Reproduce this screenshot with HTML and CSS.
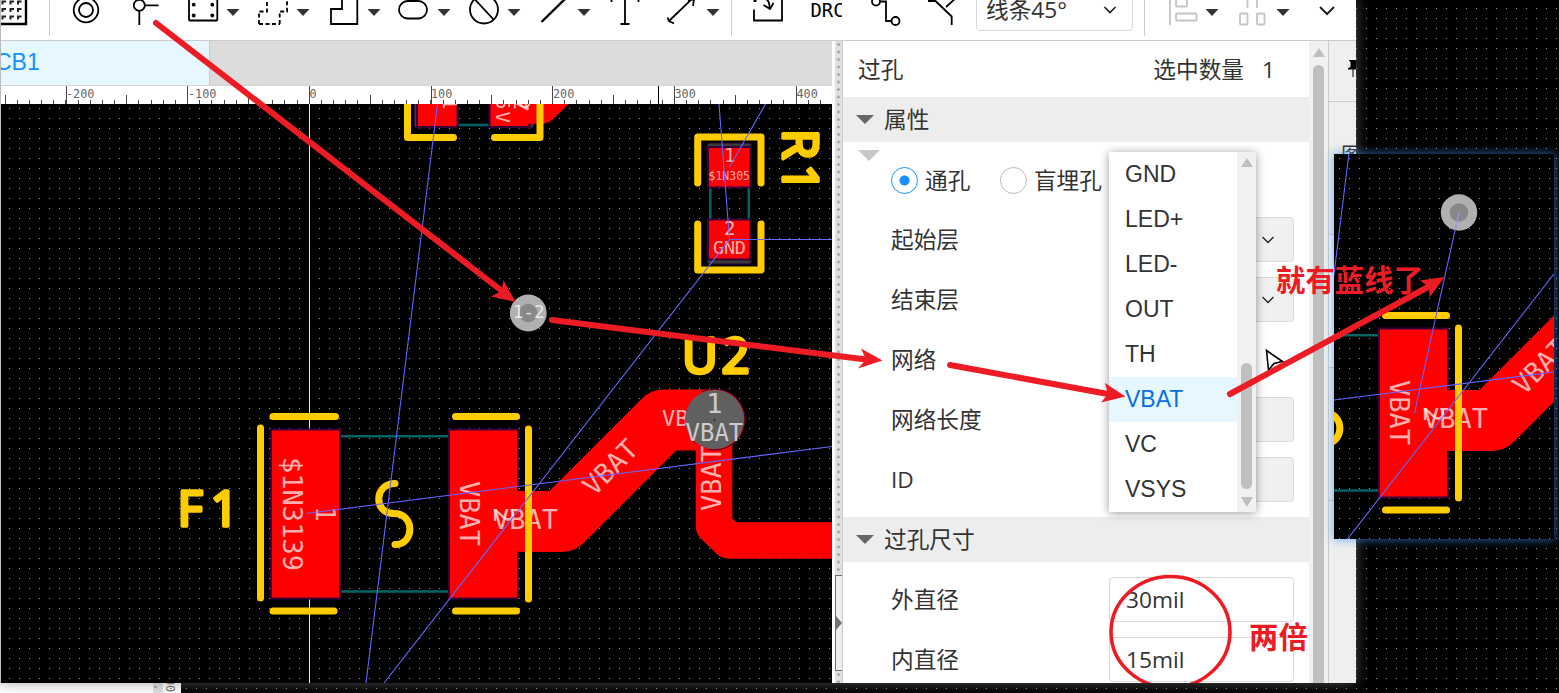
FILE: index.html
```html
<!DOCTYPE html>
<html lang="zh-CN">
<head>
<meta charset="utf-8">
<title>PCB</title>
<link rel="stylesheet" href="styles.css">
</head>
<body>
<div class="desktop">
  <div class="behind"><div class="behind-strip"></div><div class="behind-ruler"><svg width="18" height="10"><text class="rul" transform="translate(3,-5) rotate(90)">00</text></svg></div></div>

  <div class="window">
    <header class="toolbar">
      <svg class="tools" width="975" height="40" viewBox="1 0 975 40">
        <g class="ic">
          <path d="M26 -2V24H-2" stroke-width="2.4"/>
          <path d="M2.500 4.500V1.500H6M10.500 4.500V1.500H14M18 4.500V1.500H21.500M2.500 12V9H6M10.500 12V9H14M18 12V9H21.500M2.500 19.500V16.500H6M10.500 19.500V16.500H14M18 19.500V16.500H21.500" stroke-width="2" stroke="#222"/>
          <circle cx="86" cy="10" r="12.300"/><circle cx="86" cy="10" r="7"/>
          <circle cx="139.300" cy="5.300" r="5.500"/><path d="M145 5.300H158.500M139.300 11V25"/>
          <rect x="189" y="-6" width="28.300" height="26.500" rx="1"/>
          <path d="M259 24V11.500H267V-4M279.700 24V11.500H287V-4M259 24H280" stroke-dasharray="4 2.500"/>
          <path d="M342 -3V9H331V24H357.300V-3"/>
          <rect x="399" y="1" width="28" height="17.500" rx="8.700"/>
          <circle cx="484" cy="9.500" r="14"/><path d="M474.500 -1L494 20"/>
          <path d="M541.500 22L566 -2" stroke-width="2.400"/>
          <path d="M625 -3V24M620.500 24H629.500M611.500 2V-2M638.500 2V-2"/>
          <path d="M669.500 20.500L695 -4M667.500 17.500L669 21L674 23.500M688 1L694 -1L693 6"/>
          <path d="M753.500 1H756.500M754 9.500V20.500H782V-2M764 -2Q770 0 769.500 8M763.500 5L770 9L773.500 3"/>
          <circle cx="876" cy="1.500" r="4"/><path d="M880 1.500H886V21H891"/><circle cx="895.500" cy="21" r="4"/>
          <path d="M928 1H935.500L951.700 16.500V25M946 7L957 -3"/>
        </g>
        <g fill="#000"><circle cx="193.700" cy="4.700" r="1.900"/><circle cx="212.300" cy="4.700" r="1.900"/><circle cx="193.700" cy="15.500" r="1.900"/><circle cx="212.300" cy="15.500" r="1.900"/></g>
        <path class="caret" d="M226.500 9h13l-6.500 7zM296.500 9h13l-6.500 7zM367.500 9h13l-6.500 7zM437.500 9h13l-6.500 7zM507.500 9h13l-6.500 7zM577.500 9h13l-6.500 7zM706.500 9h13l-6.500 7z"/>
        <path class="sep" d="M49.500 0V36M731.500 0V36"/>
        <svg x="808" y="0" width="34" height="40"><text class="drc" x="2.500" y="17" textLength="34" lengthAdjust="spacingAndGlyphs">DRC</text></svg>
      </svg>
      <div class="angle"><span>线条45°</span><svg width="14" height="10" viewBox="0 0 14 10"><path class="chev" d="M1.500 2L7 7.500L12.500 2"/></svg></div>
      <svg class="tools" width="223" height="40" viewBox="1133 0 223 40">
        <path class="sep" d="M1144.500 0V36"/>
        <g class="ic off">
          <path d="M1170 0V25"/><rect x="1176" y="-4" width="11" height="10.500" rx="1"/><rect x="1176" y="13.500" width="20.500" height="7" rx="1"/>
          <path d="M1247.500 0V8M1257 0V8"/><rect x="1240" y="13.500" width="7.500" height="11" rx="1"/><rect x="1257" y="13.500" width="7.500" height="11" rx="1"/>
        </g>
        <path class="caret" d="M1205.500 9h13l-6.500 7zM1276.500 9h13l-6.500 7z"/>
        <path class="chev heavy" d="M1320 7L1327 14L1334 7"/>
      </svg>
    </header>

    <div class="work">
      <section class="editor">
        <div class="tabs"><div class="tab">CB1</div></div>
        <svg class="ruler" width="831" height="18" viewBox="1 86 831 18">
          <g shape-rendering="crispEdges" stroke="#444" fill="none">
            <path d="M4.500 102H832" stroke-width="4" stroke-dasharray="1 11.170"/>
            <path d="M4.500 99.500H832" stroke-width="9" stroke-dasharray="1 120.700"/>
            <path d="M65.500 95H832" stroke-width="18" stroke-dasharray="1 120.700"/>
            <path d="M658.500 86V104" stroke="#000"/>
          </g>
          <g class="rul"><text x="66" y="98">-200</text><text x="188" y="98">-100</text><text x="309.500" y="98">0</text><text x="431" y="98">100</text><text x="553" y="98">200</text><text x="674.500" y="98">300</text><text x="796.500" y="98">400</text></g>
        </svg>
        <svg class="board dots" width="831" height="579" viewBox="1 104 831 579">
          <g id="board">
            <path d="M309.500 104V683" stroke="#e8e8e8"/>
            <g class="teal"><path d="M341 436.200H449M341 591.500H449M710.300 188V219M748.800 188V219M458 125H490"/></g>
            <g class="pads-shadow"><rect x="707" y="143" width="44.500" height="20" rx="3"/><rect x="707" y="243" width="44.500" height="21" rx="3"/><rect x="414" y="95" width="20" height="33" rx="3"/><rect x="514" y="95" width="20" height="33" rx="3"/></g>
            <g class="track">
              <path stroke-width="61" d="M487 521.500H562L663.600 420H714"/>
              <path stroke-width="36.500" d="M714 420V526L729 540.500H850"/>
              <path stroke-width="36.500" d="M512 105.500H541L570 77"/>
            </g>
            <circle cx="714.500" cy="419.500" r="30.500" fill="#f00" stroke="#38003a"/>
            <path d="M660 392H714V449H696V440H660z" fill="#f00"/>
            <g class="pad"><rect x="271" y="429.500" width="69" height="169"/><rect x="449" y="429.500" width="69" height="169"/><rect x="708" y="147" width="42.500" height="40.500"/><rect x="708" y="219.500" width="42.500" height="40"/><rect x="417" y="95" width="40.500" height="32"/><rect x="489.500" y="95" width="40" height="32"/></g>
            <path d="M510 491.500H522V551.500H510zM510 100H534V123.500H510z" fill="#f00"/>
            <g class="pt">
              <text transform="translate(283,457) rotate(90)" font-size="27" textLength="114">$1N3139</text>
              <text transform="translate(316,506) rotate(90)" font-size="26">1</text>
              <text transform="translate(460,481) rotate(90)" font-size="27">VBAT</text>
              <text transform="translate(494,507) rotate(90)" font-size="27">2</text>
              <text x="493" y="529" font-size="27">VBAT</text>
              <text transform="translate(594,497) rotate(-45)" font-size="27">VBAT</text>
              <text transform="translate(721,511) rotate(-90)" font-size="27">VBAT</text>
              <text x="662" y="426" font-size="22">VB</text>
              <text x="724" y="162" font-size="19">1</text>
              <text x="708.500" y="180" font-size="11.500">$1N305</text>
              <text x="724" y="234.500" font-size="19">2</text>
              <text x="713" y="254" font-size="18.500" textLength="33">GND</text>
              <text transform="translate(443,98) rotate(90)" font-size="19">1</text>
              <text transform="translate(496,98) rotate(90)" font-size="19" textLength="25">5V</text>
              <text transform="translate(514,97) rotate(90)" font-size="22">2</text>
              <text transform="translate(524,114) rotate(-45)" font-size="20">V</text>
            </g>
            <circle cx="714.500" cy="419.500" r="29.500" fill="#606060"/><circle cx="714.500" cy="420" r="1" fill="#222"/>
            <g class="ct"><text x="706.300" y="413" font-size="27">1</text><text x="685.500" y="440.500" font-size="24">VBAT</text></g>
            <g class="silk">
              <path d="M273 416.500H335.500M273 611H334M260.500 428V598M455.500 416.500H516.500M455.500 611H516.500M528.500 429V599"/>
              <path d="M395 483.500C374 483.500 373 513.500 394 513.500C415 513.500 415 544.500 395 544.500"/>
              <path d="M697.700 183V137H761V183M697.700 224V270H761V224M407.500 100V137.500H453.500M494.500 137.500H540V100"/>
              <g class="silk-text">
                <text x="177.500 210.500" y="526">F1</text>
                <text x="682 721.500" y="373">U2</text>
                <text transform="translate(782.500,129) rotate(90)" x="0 35" y="0">R1</text>
              </g>
            </g>
            <path class="net" d="M437.500 104L366 683M719 104L729.500 239.500L384 683M765.500 104L729.500 167M729.500 239.500H832M306.500 513.500L832 446.500"/>
          </g>
          <g><circle cx="528.300" cy="313" r="18.400" fill="#b0b0b0"/><circle cx="528.300" cy="313" r="9.200" fill="#888"/><text class="pt via" x="513" y="318" font-size="17.500">1-2</text></g>
        </svg>
      </section>

      <div class="splitter"><div class="handle"><svg width="6" height="14"><path d="M0 0L6 7L0 14z" fill="#766e70"/></svg></div></div>

      <section class="panel">
        <div class="title"><span>过孔</span><span class="count">选中数量</span><span>1</span></div>
        <div class="section"><i class="tri"></i>属性</div>
        <div class="group">
          <i class="ghost"></i>
          <div class="row radios"><i class="radio on"></i><span>通孔</span><i class="radio second"></i><span>盲埋孔</span></div>
          <div class="row"><label>起始层</label><div class="field dis"><svg width="14" height="10" viewBox="0 0 14 10"><path class="chev thin" d="M1.500 2L7 7.500L12.500 2"/></svg></div></div>
          <div class="row"><label>结束层</label><div class="field dis"><svg width="14" height="10" viewBox="0 0 14 10"><path class="chev thin" d="M1.500 2L7 7.500L12.500 2"/></svg></div></div>
          <div class="row"><label>网络</label></div>
          <div class="row"><label>网络长度</label><div class="field dis"></div></div>
          <div class="row"><label>ID</label><div class="field dis"></div></div>
          <div class="menu">
            <ul><li>GND</li><li>LED+</li><li>LED-</li><li>OUT</li><li>TH</li><li class="sel">VBAT</li><li>VC</li><li>VSYS</li></ul>
            <div class="menu-bar"><i class="up"></i><i class="thumb"></i><i class="down"></i></div>
          </div>
        </div>
        <div class="section"><i class="tri"></i>过孔尺寸</div>
        <div class="group">
          <div class="row"><label>外直径</label><div class="field">30mil</div></div>
          <div class="row"><label>内直径</label><div class="field">15mil</div></div>
        </div>
      </section>
      <div class="scroll"><i class="up"></i><i class="thumb"></i></div>
      <aside class="side">
        <div class="side-head"><svg width="8" height="20"><path d="M1 0H8V9H0L3 7V2zM5 9V17" stroke="#000"/></svg></div>
        <div class="side-tab">图</div><div class="side-block lit"></div><div class="side-block"></div>
      </aside>
    </div>
  </div>

  <svg class="inset dots" width="220" height="385" viewBox="404 255 220 385">
    <use href="#board"/>
    <circle cx="529" cy="313.500" r="18.200" fill="#b0b0b0"/><circle cx="529" cy="313.500" r="9.200" fill="#888"/>
    <path class="net" d="M484.500 514L529 313.500"/><path d="M525 331L529 313.500" stroke="#a9a9ee"/>
  </svg>

  <svg class="notes" width="1559" height="683" viewBox="0 0 1559 683">
    <path d="M1266.500 350.500L1282.500 361.500L1274 363.500L1268.500 370z" fill="#fff" stroke="#000" stroke-width="1.600"/>
    <g class="ink">
      <path d="M156 23L502 291M552 320L866 359.500M950 365L1108 394M1230 394L1430 286"/>
      <ellipse cx="1170.500" cy="632" rx="59.500" ry="55.500" stroke-width="3.600"/>
    </g>
    <path fill="#ed1c24" d="M515.500 302L503.500 280L501.500 291L491 296.500zM882.500 360.500L861 348.500L866 359.500L858 368.500zM1125.500 396.500L1105 383L1108 394L1101 402.500zM1444.500 277L1420 280.500L1429 287L1429.500 297.500z"/>
    <g class="note-text"><text x="1276" y="291" textLength="147">就有蓝线了</text><text x="1249" y="648" textLength="59">两倍</text></g>
  </svg>
</div>
</body>
</html>
```
FILE: styles.css
```css
* { box-sizing: border-box; }
body { margin: 0; font-family: "Open Sans", "Noto Sans CJK SC", sans-serif; font-size: 22.7px; color: #333; }
.desktop { position: relative; width: 1559px; height: 693px; overflow: hidden;
  background: #000 conic-gradient(from 90deg at 1px 1px, #000 0 50%, #999 0 75%, #000 0) 6px 8px / 10px 10px; }
.behind { position: absolute; left: 0; bottom: 0; width: 181px; height: 40px; background: #fff; display: flex; justify-content: flex-end; align-items: flex-end; }
.behind-strip { width: 10px; height: 10px; background: radial-gradient(circle at 2.5px 4px, #aaa 1.3px, transparent 1.6px), #e0e0e0; }
.behind-ruler { width: 18px; height: 10px; }
.behind-ruler svg { display: block; }
.dots { background: #000 conic-gradient(from 90deg at 1px 1px, #000 0 50%, #999 0 75%, #000 0) 8px 4px / 10px 10px; display: block; }
.window { position: relative; width: 1356px; height: 683px; border-left: 1px solid #bbb; background: #fff; box-shadow: 0 0 13px rgba(125,120,123,.65); display: flex; flex-direction: column; }

.toolbar { height: 41px; border-bottom: 1px solid #ccc; display: flex; flex: none; overflow: hidden; }
.tools { flex: none; display: block; }
.ic { fill: none; stroke: #000; stroke-width: 1.8; }
.off { stroke: #c4c4c4; }
.caret { fill: #333; }
.sep { stroke: #ccc; }
.chev { fill: none; stroke: #222; stroke-width: 1.7; }
.thin { stroke-width: 1.3; }
.heavy { stroke-width: 2; }
.drc { font-family: "DejaVu Sans Mono", monospace; font-size: 19px; }
.angle { width: 157px; height: 45px; margin-top: -14px; border: 1px solid #d9d9e0; border-radius: 4px; display: flex; align-items: center; justify-content: space-between; padding: 3px 15px 0 9px; flex: none; line-height: 40px; }

.work { flex: 1; display: flex; min-height: 0; overflow: hidden; }
.editor { width: 831px; flex: none; }
.tabs { height: 45px; background: #dcdcdc; border-bottom: 1px solid #d4d4d4; overflow: hidden; }
.tab { width: 209px; height: 45px; background: #e6f7ff; border-right: 1px solid #ccc; color: #1890ff; font-family: "Liberation Sans", sans-serif; line-height: 43px; text-indent: -6px; overflow: hidden; font-size: 23px; }
.ruler { display: block; background: #fff; }
.rul { font-family: "DejaVu Sans Mono", monospace; font-size: 11.8px; fill: #666; }
.board { overflow: hidden; }
.teal { stroke: #006464; stroke-width: 2.5; fill: none; }
.pads-shadow { fill: #3a3a3a; stroke: #280028; }
.track { fill: none; stroke: #f00; stroke-linejoin: round; stroke-linecap: round; }
.pad { fill: #f00; stroke: #38003a; stroke-width: 2; }
.pt { font-family: "DejaVu Sans Mono", monospace; fill: #fff; fill-opacity: .7; }
.via { fill-opacity: .75; }
.ct { font-family: "DejaVu Sans Mono", monospace; fill: #ccc; }
.silk { fill: none; stroke: #fc0; stroke-width: 7; stroke-linecap: round; stroke-linejoin: round; }
.silk-text { font-family: "Noto Sans", sans-serif; font-size: 49px; fill: #fc0; stroke-width: 3.4; }
.net { fill: none; stroke: #6464ff; stroke-width: 1.1; }

.splitter { width: 11px; flex: none; border-left: 3px solid #fff; border-right: 1px solid #ccc; padding-top: 534px; background: radial-gradient(circle at 3.5px 3.5px, #aaa 1.3px, transparent 1.6px) 0 0 / 8px 7.5px, #e0e0e0; }
.handle { height: 96px; width: 7px; border: 1px solid #766e70; border-right: 0; background: #eee; display: flex; align-items: center; }

.panel { width: 466px; flex: none; background: #fff; line-height: 32px; }
.title { height: 56px; display: flex; align-items: center; padding: 2px 34px 0 15px; }
.count { margin-left: auto; margin-right: 18px; }
.section { height: 45px; background: #ededed; display: flex; align-items: center; gap: 10px; padding-left: 13px; }
.tri { border: 9px solid transparent; border-top-color: #666; border-bottom: 0; }
.group { position: relative; padding: 8px 0 7px; }
.ghost { position: absolute; left: 15px; top: 8px; border: 11px solid transparent; border-top-color: #c8c8c8; border-bottom: 0; }
.row { height: 60px; display: flex; align-items: center; padding: 0 15px 1px 48px; }
.row label { width: 218px; padding-top: 1px; flex: none; }
.radio { width: 27px; height: 27px; border: 1px solid #bbb; border-radius: 50%; margin-right: 7px; flex: none; }
.radios { padding-bottom: 0; }
.radios span { padding-top: 2px; }
.on { border-color: #1890ff; background: radial-gradient(circle, #1890ff 4.7px, transparent 5.4px); }
.second { margin-left: 29.5px; }
.field { width: 185px; height: 45px; border: 1px solid #d9d9d9; border-radius: 4px; padding: 1px 18px 0 16px; display: flex; align-items: center; }
.dis { background: #f0f0f0; justify-content: flex-end; }
.menu { position: absolute; left: 266px; top: 10px; width: 147px; height: 360px; background: #fff; display: flex; box-shadow: 0 1px 9px rgba(0,0,0,.4); font-family: "Liberation Sans", sans-serif; font-size: 23px; }
.menu ul { flex: 1; margin: 0; padding: 0; list-style: none; }
.menu li { height: 45px; line-height: 44px; padding-left: 16px; }
.menu .sel { background: #e6f7ff; color: #0a6edc; }
.menu-bar { width: 19px; background: #f1f1f1; display: flex; flex-direction: column; align-items: center; padding: 6px 0 5px; }
.up { border: 6px solid transparent; border-bottom: 9px solid #bfbfbf; border-top: 0; flex: none; }
.down { border: 6px solid transparent; border-top: 10px solid #bfbfbf; border-bottom: 0; margin-top: 8px; }
.thumb { width: 11px; background: #bfbfbf; border-radius: 6px; }
.menu-bar .thumb { height: 126px; margin-top: auto; }
.scroll { width: 19px; flex: none; background: #f1f1f1; display: flex; flex-direction: column; align-items: center; padding-top: 7px; }
.scroll .thumb { flex: 1; margin-top: 8px; border-radius: 6px 6px 0 0; }
.side { flex: 1; border-left: 1px solid #ccc; background: #efefef; overflow: hidden; }
.side-head { height: 61px; border-bottom: 1px solid #ccc; display: flex; justify-content: flex-end; padding-top: 19px; }
.side-tab { height: 133px; padding: 36px 0 0 12px; line-height: 32px; font-size: 21px; border-bottom: 1px solid #ccc; }
.side-block { height: 133px; border-bottom: 1px solid #ccc; }
.lit { background: #f5f9fc; }

.inset { position: absolute; left: 1334px; top: 154px; background-position: 5px 4px; box-shadow: 0 0 9px 1px rgba(60,140,235,.65); }
.notes { position: absolute; left: 0; top: 0; overflow: hidden; }
.ink { fill: none; stroke: #ed1c24; stroke-width: 6; stroke-linecap: round; }
.note-text { font-family: "Noto Sans CJK SC", sans-serif; font-weight: 700; font-size: 29.3px; fill: #ed1c24; }
```
